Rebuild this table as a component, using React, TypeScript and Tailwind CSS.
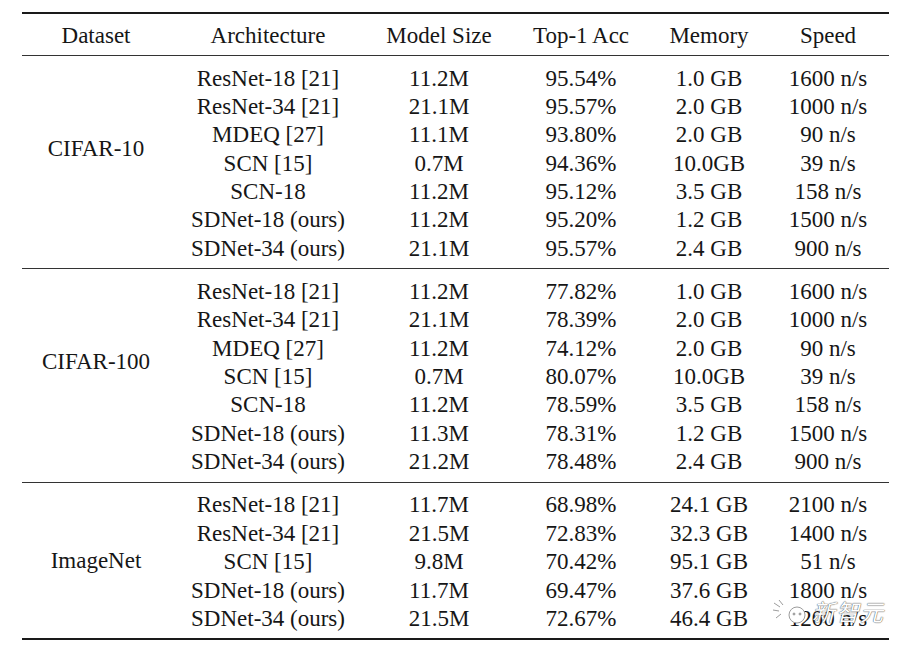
const sections = [
  {
    name: "CIFAR-10",
    shift: "pb-[30px]",
    rows: [
      ["ResNet-18 [21]", "11.2M", "95.54%", "1.0 GB", "1600 n/s"],
      ["ResNet-34 [21]", "21.1M", "95.57%", "2.0 GB", "1000 n/s"],
      ["MDEQ [27]", "11.1M", "93.80%", "2.0 GB", "90 n/s"],
      ["SCN [15]", "0.7M", "94.36%", "10.0GB", "39 n/s"],
      ["SCN-18", "11.2M", "95.12%", "3.5 GB", "158 n/s"],
      ["SDNet-18 (ours)", "11.2M", "95.20%", "1.2 GB", "1500 n/s"],
      ["SDNet-34 (ours)", "21.1M", "95.57%", "2.4 GB", "900 n/s"],
    ],
  },
  {
    name: "CIFAR-100",
    shift: "pb-[30px]",
    rows: [
      ["ResNet-18 [21]", "11.2M", "77.82%", "1.0 GB", "1600 n/s"],
      ["ResNet-34 [21]", "21.1M", "78.39%", "2.0 GB", "1000 n/s"],
      ["MDEQ [27]", "11.2M", "74.12%", "2.0 GB", "90 n/s"],
      ["SCN [15]", "0.7M", "80.07%", "10.0GB", "39 n/s"],
      ["SCN-18", "11.2M", "78.59%", "3.5 GB", "158 n/s"],
      ["SDNet-18 (ours)", "11.3M", "78.31%", "1.2 GB", "1500 n/s"],
      ["SDNet-34 (ours)", "21.2M", "78.48%", "2.4 GB", "900 n/s"],
    ],
  },
  {
    name: "ImageNet",
    shift: "pb-[2px]",
    rows: [
      ["ResNet-18 [21]", "11.7M", "68.98%", "24.1 GB", "2100 n/s"],
      ["ResNet-34 [21]", "21.5M", "72.83%", "32.3 GB", "1400 n/s"],
      ["SCN [15]", "9.8M", "70.42%", "95.1 GB", "51 n/s"],
      ["SDNet-18 (ours)", "11.7M", "69.47%", "37.6 GB", "1800 n/s"],
      ["SDNet-34 (ours)", "21.5M", "72.67%", "46.4 GB", "1200 n/s"],
    ],
  },
];

const headers = ["Dataset", "Architecture", "Model Size", "Top-1 Acc", "Memory", "Speed"];

export default function App() {
  return (
    <div className="relative w-[911px] h-[651px] bg-white px-[22px] pt-[12px] text-[#161616] text-[23px] leading-none font-['Liberation_Serif','Times_New_Roman',serif]">
      <div className="border-t-2 border-[#1a1a1a]">
        <div className="grid grid-cols-[148px_196px_146px_138px_118px_120px] h-[42px] items-center border-b border-[#333]">
          {headers.map((h) => (
            <div key={h} className="text-center pt-[2px]">
              {h}
            </div>
          ))}
        </div>

        {sections.map((s, i) => (
          <div
            key={s.name}
            className={`flex pt-[8px] ${
              i === sections.length - 1 ? "pb-[5px] border-b-2 border-[#1a1a1a]" : "pb-[6px] border-b border-[#333]"
            }`}
          >
            <div className={`w-[148px] flex items-center justify-center ${s.shift}`}>{s.name}</div>
            <div className="flex flex-col">
              {s.rows.map((r, j) => (
                <div key={j} className="grid grid-cols-[196px_146px_138px_118px_120px] h-[28.35px] items-center">
                  {r.map((c, k) => (
                    <div key={k} className="text-center">
                      {c}
                    </div>
                  ))}
                </div>
              ))}
            </div>
          </div>
        ))}
      </div>

      {/* watermark */}
      <div className="absolute left-[772px] top-[597px] flex items-center gap-[4px]">
        <svg width="36" height="28" viewBox="0 0 36 28" fill="none" stroke="#9c9c9c" strokeWidth="1">
          <path d="M2 6 L8 10 M1 13 L7 14 M4 21 L9 17 M7 3 L11 8" />
          <circle cx="25" cy="18" r="8" fill="white" />
          <circle cx="22" cy="17" r="1" fill="#9c9c9c" />
          <circle cx="28" cy="17" r="1" fill="#9c9c9c" />
        </svg>
        <span className="text-[23px] tracking-[1px] text-white italic [text-shadow:0_0_1px_#555,0_0_1px_#555] font-['Noto_Sans_CJK_SC',sans-serif]">
          新智元
        </span>
      </div>
    </div>
  );
}
